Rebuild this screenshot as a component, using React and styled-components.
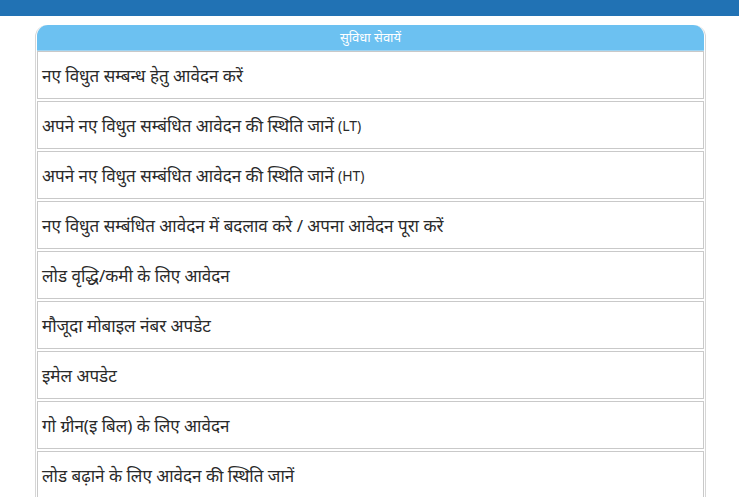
import styled, { createGlobalStyle } from 'styled-components'

const GlobalStyle = createGlobalStyle`
    body {
        margin: 0;
        background-color: #ffffff;
        font-family: 'Noto Sans', 'Liberation Sans', sans-serif;
    }
`

const TopBar = styled.div`
    height: 16px;
    background-color: #2172b4;
`

const Page = styled.div`
    padding: 9px 33px 0 35px;
`

const Panel = styled.div`
    border: 1px solid #d6d6d6;
    border-top: none;
    border-radius: 12px 12px 0 0;
    padding: 0 1px;
`

const PanelHeader = styled.div`
    height: 25px;
    background-color: #6cc1f1;
    border-radius: 11px 11px 0 0;
    color: #ffffff;
    font-size: 13px;
    text-align: center;
    line-height: 25px;
    border-bottom: 1px solid #9fd4f2;
`

const List = styled.div`
    display: flex;
    flex-direction: column;
    gap: 2px;
`

const Row = styled.a`
    display: flex;
    align-items: center;
    height: 46px;
    padding: 0 4px;
    border: 1px solid #c9c9c9;
    color: #2a2a2a;
    font-size: 17px;
    text-decoration: none;
    background-color: #ffffff;
`

const Latin = styled.span`
    font-size: 14px;
    margin-left: 4px;
`

const items = [
    { text: 'नए विधुत सम्बन्ध हेतु आवेदन करें' },
    { text: 'अपने नए विधुत सम्बंधित आवेदन की स्थिति जानें', tag: '(LT)' },
    { text: 'अपने नए विधुत सम्बंधित आवेदन की स्थिति जानें', tag: '(HT)' },
    { text: 'नए विधुत सम्बंधित आवेदन में बदलाव करे / अपना आवेदन पूरा करें' },
    { text: 'लोड वृद्धि/कमी के लिए आवेदन' },
    { text: 'मौजूदा मोबाइल नंबर अपडेट' },
    { text: 'इमेल अपडेट' },
    { text: 'गो ग्रीन(इ बिल) के लिए आवेदन' },
    { text: 'लोड बढ़ाने के लिए आवेदन की स्थिति जानें' },
]

export default function App() {
    return (
        <>
            <GlobalStyle />
            <TopBar />
            <Page>
                <Panel>
                    <PanelHeader>सुविधा सेवायें</PanelHeader>
                    <List>
                        {items.map((item) => (
                            <Row key={item.text + (item.tag || '')} href='#'>
                                {item.text}
                                {item.tag && <Latin>{item.tag}</Latin>}
                            </Row>
                        ))}
                    </List>
                </Panel>
            </Page>
        </>
    )
}
